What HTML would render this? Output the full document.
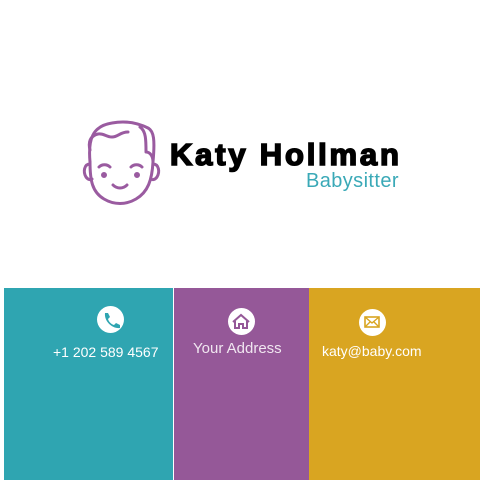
<!DOCTYPE html>
<html><head><style>
body{margin:0;width:480px;height:480px;background:#fff;position:relative;overflow:hidden;font-family:"Liberation Sans",sans-serif}
.p{position:absolute;top:288px;height:192px}
.t{position:absolute;color:#fff;font-size:14px;white-space:nowrap}
.c{position:absolute;width:27px;height:27px;border-radius:50%;background:#fff}
</style></head><body>
<svg width="480" height="480" style="position:absolute;left:0;top:0" fill="none" stroke="#9a5ba0" stroke-width="3" stroke-linecap="round" stroke-linejoin="round">
<path d="M90 162 C88 140 92 126 112 123 C128 120 140 124 148 128 C154 131 155 140 153 162"/>
<path d="M90 162 C90 180 92 192 104 199 C114 205 126 205 136 199 C148 192 152 180 153 162"/>
<path d="M90 150 C88 142 90 136 98 134 C104 133 106 137 112 137 C118 137 120 132 128 132"/>
<path d="M140 127 C146 131 146 140 146 152 C150 152 153 156 153 162"/>
<path d="M90 164 C84 164 83 172 86 177 C88 180 91 180 92 179"/>
<path d="M153 164 C159 164 160 172 157 177 C155 180 152 180 151 179"/>
<path d="M99 167 C102 164 107 164 110 167"/>
<path d="M131 167 C134 164 139 164 142 167"/>
<path d="M113 185 C117 189 123 189 127 185"/>
<circle cx="104" cy="175" r="1.5" fill="#9a5ba0"/>
<circle cx="137" cy="175" r="1.5" fill="#9a5ba0"/>
</svg>
<div style="position:absolute;left:170px;top:137px;font-size:31px;font-weight:bold;color:#000;-webkit-text-stroke:1.6px #000;letter-spacing:2.8px">Katy Hollman</div>
<div style="position:absolute;left:306px;top:170px;font-size:20px;color:#3aa9b7;letter-spacing:0.4px">Babysitter</div>
<div class="p" style="left:4px;width:169px;background:#2fa5b1"></div>
<div class="p" style="left:174px;width:135px;background:#955898"></div>
<div class="p" style="left:309px;width:171px;background:#d9a521"></div>
<div class="c" style="left:97px;top:306px"></div>
<div class="c" style="left:228px;top:308px"></div>
<div class="c" style="left:359px;top:309px"></div>
<svg width="480" height="480" style="position:absolute;left:0;top:0">
<path d="M105 313 l3 0 l2 4 l-2 2 c1 3 3 5 6 6 l2 -2 l4 2 l0 3 c-8 1 -16 -7 -15 -15z" fill="#2fa5b1"/>
<path d="M233 322 l8 -7 l8 7 M235 321 v7 h4 v-4 h4 v4 h4 v-7" fill="none" stroke="#955898" stroke-width="2"/>
<rect x="365" y="317" width="14" height="10" fill="none" stroke="#d9a521" stroke-width="1.6"/>
<path d="M365 317 l7 6 l7 -6 M365 327 l5 -5 M379 327 l-5 -5" fill="none" stroke="#d9a521" stroke-width="1.4"/>
</svg>
<div class="t" style="left:53px;top:344px">+1 202 589 4567</div>
<div class="t" style="left:193px;top:340px;color:#f0e6f0;font-size:15px">Your Address</div>
<div class="t" style="left:322px;top:343px">katy@baby.com</div>
</body></html>
